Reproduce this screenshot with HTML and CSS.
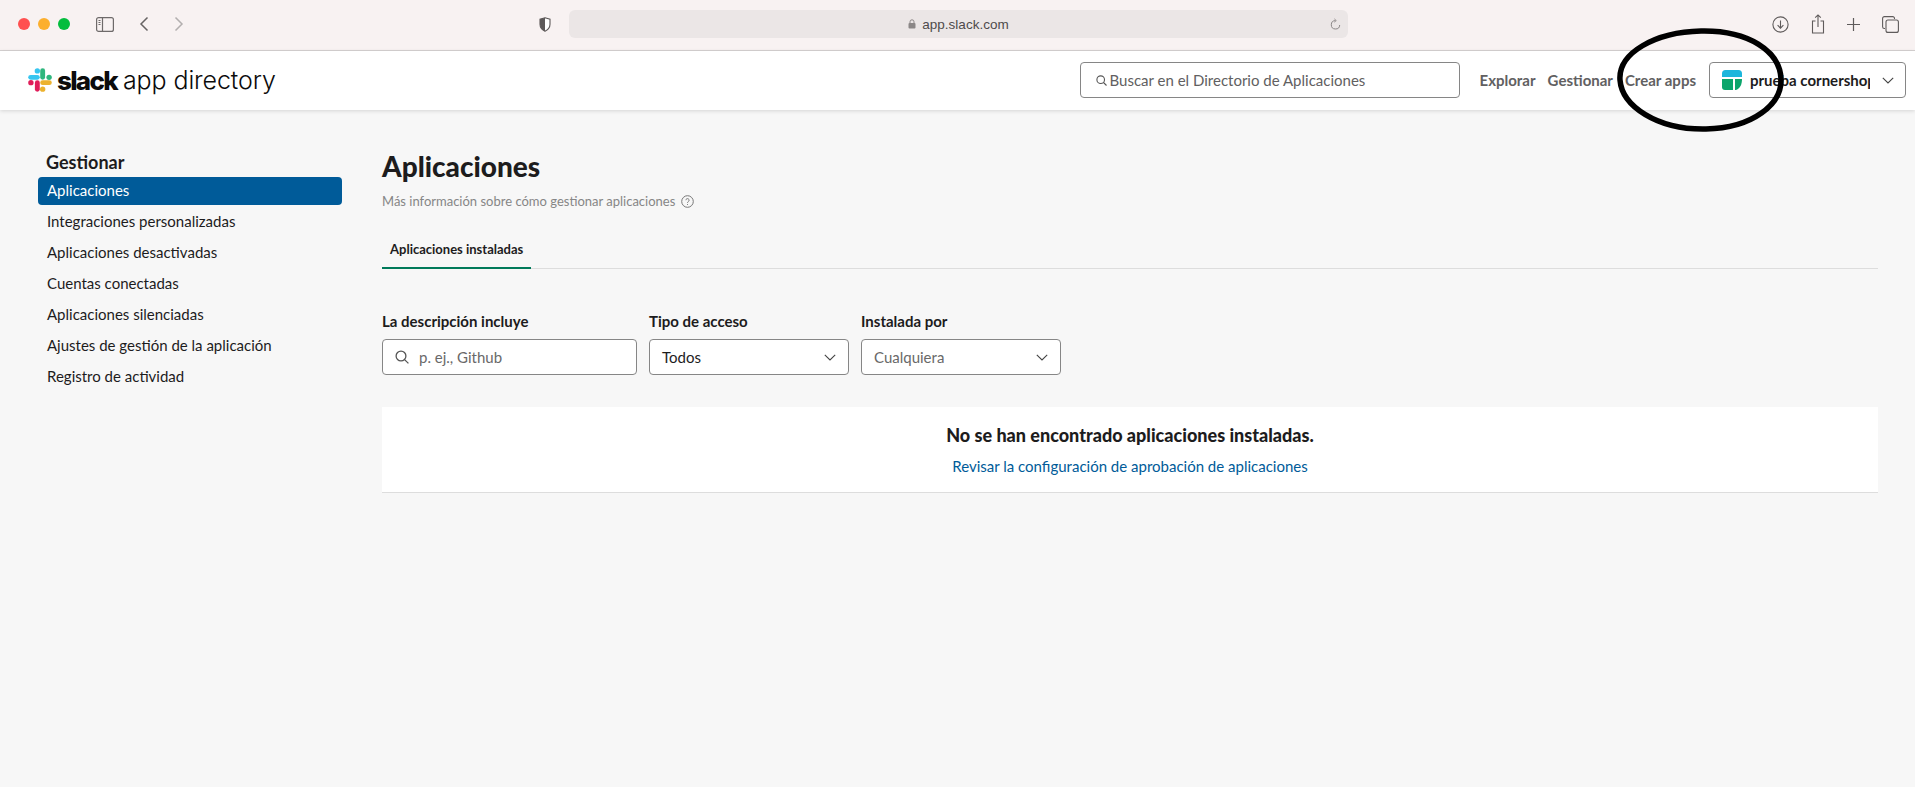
FILE: index.html
```html
<!DOCTYPE html>
<html lang="es">
<head>
    <meta charset="UTF-8">
    <title>Aplicaciones | Slack App Directory</title>
    <link rel="stylesheet" href="styles.css">
</head>
<body>
    <div class="browser-bar">
        <div class="traffic">
            <span class="dot dot-red"></span>
            <span class="dot dot-yellow"></span>
            <span class="dot dot-green"></span>
        </div>
        <svg class="sidebar-icon" width="18" height="15" viewBox="0 0 18 15" fill="none" stroke="#6e6a6a" stroke-width="1.2">
            <rect x="0.6" y="0.6" width="16.8" height="13.8" rx="2"/>
            <path d="M6.5 0.6v13.8"/>
            <path d="M2.5 3.5h2M2.5 5.5h2M2.5 7.5h2" stroke-width="1"/>
        </svg>
        <svg class="nav-icon" width="10" height="16" viewBox="0 0 10 16" fill="none" stroke="#676363" stroke-width="1.5">
            <path d="M8.5 1.5L2 8l6.5 6.5"/>
        </svg>
        <svg class="nav-icon nav-forward" width="10" height="16" viewBox="0 0 10 16" fill="none" stroke="#b3afaf" stroke-width="1.5">
            <path d="M1.5 1.5L8 8l-6.5 6.5"/>
        </svg>
        <svg class="shield" width="12" height="15" viewBox="0 0 12 15">
            <path d="M6 .7L11 2.2v5c0 3.4-2.2 5.6-5 7-2.8-1.4-5-3.6-5-7v-5z" fill="#fff" stroke="#5c5858" stroke-width="1.1"/>
            <path d="M6 .7L1 2.2v5c0 3.4 2.2 5.6 5 7z" fill="#5c5858"/>
        </svg>
        <div class="address">
            <span class="address-text">
                <svg width="8" height="10" viewBox="0 0 8 10"><path d="M2 4V2.8a2 2 0 0 1 4 0V4" fill="none" stroke="#8b8787"/><rect x=".5" y="4" width="7" height="5.5" rx="1" fill="#8b8787"/></svg>
                app.slack.com
            </span>
            <svg class="reload" width="11" height="13" viewBox="0 0 11 13" fill="none" stroke="#8b8787">
                <path d="M5.5 2.6a4.2 4.2 0 1 0 4.2 4.4"/>
                <path d="M4.3.8l2 1.8-2 1.6" stroke-width=".8"/>
            </svg>
        </div>
        <div class="browser-actions">
            <svg width="17" height="17" viewBox="0 0 17 17" fill="none" stroke="#5f5b5b" stroke-width="1.1">
                <circle cx="8.5" cy="8.5" r="7.6"/>
                <path d="M8.5 4.5v7.5M5.6 9.2l2.9 2.9 2.9-2.9"/>
            </svg>
            <svg width="14" height="20" viewBox="0 0 14 20" fill="none" stroke="#5f5b5b" stroke-width="1.1">
                <path d="M4.5 7H1.5v12h11V7H9.5"/>
                <path d="M7 13V1M4.2 3.6L7 .9l2.8 2.7"/>
            </svg>
            <svg width="13" height="13" viewBox="0 0 13 13" fill="none" stroke="#5f5b5b" stroke-width="1.2">
                <path d="M6.5 0v13M0 6.5h13"/>
            </svg>
            <svg width="17" height="17" viewBox="0 0 17 17" fill="none" stroke="#5f5b5b" stroke-width="1.1">
                <path d="M3 12.5H2.4A1.8 1.8 0 0 1 .6 10.7V2.4A1.8 1.8 0 0 1 2.4.6h8.3a1.8 1.8 0 0 1 1.8 1.8V3"/>
                <rect x="4" y="4" width="12.4" height="12.4" rx="2"/>
            </svg>
        </div>
    </div>

    <header class="site-header">
        <a class="logo" href="#">
            <svg width="24" height="24" viewBox="0 0 54 54" fill="none" stroke-width="11" stroke-linecap="round">
                <path d="M33 6v15" stroke="#2eb67d"/>
                <path d="M47.5 21h-.1" stroke="#2eb67d" stroke-width="12"/>
                <path d="M6 21h15" stroke="#36c5f0"/>
                <path d="M21 6.5v.1" stroke="#36c5f0" stroke-width="12"/>
                <path d="M21 33v15" stroke="#e01e5a"/>
                <path d="M6.5 33h.1" stroke="#e01e5a" stroke-width="12"/>
                <path d="M33 33h15" stroke="#ecb22e"/>
                <path d="M33 47.5v.1" stroke="#ecb22e" stroke-width="12"/>
            </svg>
            <span class="logo-slack">slack</span>
            <span class="logo-dir">app directory</span>
        </a>
        <div class="search-box">
            <svg width="11" height="11" viewBox="0 0 11 11" fill="none" stroke="#555" stroke-width="1.1"><circle cx="4.7" cy="4.7" r="3.8"/><path d="M7.5 7.5l3 3"/></svg>
            Buscar en el Directorio de Aplicaciones
        </div>
        <nav class="top-nav">
            <a href="#">Explorar</a>
            <a href="#">Gestionar</a>
            <a href="#">Crear apps</a>
        </nav>
        <div class="workspace">
            <svg width="20" height="20" viewBox="0 0 20 20">
                <path d="M0 7V3.5A3.5 3.5 0 0 1 3.5 0h13A3.5 3.5 0 0 1 20 3.5V7z" fill="#1cb6dc"/>
                <path d="M0 9h11v11H3a3 3 0 0 1-3-3z" fill="#0ba56b"/>
                <path d="M13 9h7c0 5-1.5 9-6 11h-1z" fill="#0ba56b"/>
            </svg>
            <span class="workspace-name">prueba cornershop</span>
            <svg class="chevron" width="12" height="7" viewBox="0 0 12 7" fill="none" stroke="#444" stroke-width="1.1"><path d="M.8.8L6 6l5.2-5.2"/></svg>
        </div>
    </header>

    <div class="page">
        <aside class="side">
            <h2 class="side-title">Gestionar</h2>
            <ul class="side-list">
                <li class="side-item active">Aplicaciones</li>
                <li class="side-item">Integraciones personalizadas</li>
                <li class="side-item">Aplicaciones desactivadas</li>
                <li class="side-item">Cuentas conectadas</li>
                <li class="side-item">Aplicaciones silenciadas</li>
                <li class="side-item">Ajustes de gestión de la aplicación</li>
                <li class="side-item">Registro de actividad</li>
            </ul>
        </aside>
        <main class="content">
            <h1 class="page-title">Aplicaciones</h1>
            <p class="page-sub">
                Más información sobre cómo gestionar aplicaciones
                <svg width="13" height="13" viewBox="0 0 13 13" fill="none" stroke="#777"><circle cx="6.5" cy="6.5" r="5.8"/><path d="M4.9 5.2a1.6 1.6 0 1 1 2.4 1.4c-.5.3-.8.6-.8 1.2M6.5 9v.9"/></svg>
            </p>
            <div class="tabs">
                <span class="tab">Aplicaciones instaladas</span>
            </div>
            <div class="filters">
                <div class="filter filter-search">
                    <label class="filter-label">La descripción incluye</label>
                    <div class="field">
                        <svg width="14" height="14" viewBox="0 0 14 14" fill="none" stroke="#555" stroke-width="1.3"><circle cx="6" cy="6" r="4.9"/><path d="M9.6 9.6l3.8 3.8"/></svg>
                        <span class="placeholder">p. ej., Github</span>
                    </div>
                </div>
                <div class="filter">
                    <label class="filter-label">Tipo de acceso</label>
                    <div class="field field-select">
                        <span>Todos</span>
                        <svg width="12" height="7" viewBox="0 0 12 7" fill="none" stroke="#444" stroke-width="1.1"><path d="M.8.8L6 6l5.2-5.2"/></svg>
                    </div>
                </div>
                <div class="filter">
                    <label class="filter-label">Instalada por</label>
                    <div class="field field-select">
                        <span class="placeholder">Cualquiera</span>
                        <svg width="12" height="7" viewBox="0 0 12 7" fill="none" stroke="#444" stroke-width="1.1"><path d="M.8.8L6 6l5.2-5.2"/></svg>
                    </div>
                </div>
            </div>
            <section class="empty">
                <h3 class="empty-title">No se han encontrado aplicaciones instaladas.</h3>
                <a class="empty-link" href="#">Revisar la configuración de aprobación de aplicaciones</a>
            </section>
        </main>
    </div>

    <!-- hand drawn circle over the header -->
    <svg class="scribble" width="172" height="108" viewBox="0 0 172 108" fill="none" stroke="#000" stroke-width="5.5">
        <path d="M86 4C133 3 165 24 166 52c1 25-28 49-75 50C42 103 7 79 5 53 3 26 40 5 86 4z"/>
    </svg>
</body>
</html>
```

FILE: styles.css
```css
* {
    box-sizing: border-box;
}
html, body {
    height: 100%;
}
body {
    margin: 0;
    font-family: Lato, "Open Sans", sans-serif;
    background-color: #f7f7f7;
    color: #1d1c1d;
    overflow: hidden;
}

/* browser chrome */
.browser-bar {
    height: 51px;
    background-color: #f8f2f2;
    border-bottom: 1px solid #d6d2d2;
    display: flex;
    align-items: center;
    padding: 0 0 2px 18px;
}
.traffic {
    display: flex;
    gap: 8px;
}
.dot {
    width: 12px;
    height: 12px;
    border-radius: 50%;
}
.dot-red { background-color: #ff5050; }
.dot-yellow { background-color: #fcaf2e; }
.dot-green { background-color: #03bd3d; }
.sidebar-icon {
    margin-left: 26px;
}
.nav-icon {
    margin-left: 25px;
}
.nav-forward {
    margin-left: 25px;
}
.shield {
    margin-left: 355px;
}
.address {
    margin-left: 18px;
    width: 779px;
    height: 28px;
    background-color: #ebe6e6;
    border-radius: 6px;
    display: flex;
    align-items: center;
    justify-content: center;
    position: relative;
}
.address-text {
    font-family: "Liberation Sans", sans-serif;
    font-size: 13.5px;
    color: #4e4b4b;
    display: flex;
    align-items: center;
    gap: 6px;
}
.reload {
    position: absolute;
    right: 7px;
    top: 8px;
}
.browser-actions {
    margin-left: auto;
    padding-right: 16px;
    display: flex;
    align-items: center;
    gap: 22px;
}

/* app directory header */
.site-header {
    height: 59px;
    background-color: #fff;
    box-shadow: 0 1px 4px rgba(0, 0, 0, .14);
    display: flex;
    align-items: center;
    padding: 0 9px 1px 28px;
    position: relative;
}
.logo {
    display: flex;
    align-items: center;
    text-decoration: none;
    color: #0b0b0b;
}
.logo-slack {
    font-family: Inter, sans-serif;
    font-size: 26px;
    font-weight: 800;
    letter-spacing: -1.7px;
    margin-left: 5px;
}
.logo-dir {
    font-family: Inter, sans-serif;
    font-size: 25px;
    font-weight: 300;
    letter-spacing: -.1px;
    margin-left: 6px;
}
.search-box {
    margin-left: auto;
    width: 380px;
    height: 36px;
    background-color: #fff;
    border: 1px solid #868686;
    border-radius: 4px;
    display: flex;
    align-items: center;
    gap: 3px;
    padding-left: 15px;
    font-size: 15px;
    color: #616061;
}
.top-nav {
    display: flex;
    gap: 12px;
    margin-left: 20px;
}
.top-nav a {
    font-size: 15px;
    font-weight: 700;
    color: #616061;
    text-decoration: none;
}
.workspace {
    margin-left: 13px;
    width: 197px;
    height: 36px;
    background-color: #fff;
    border: 1px solid #868686;
    border-radius: 4px;
    display: flex;
    align-items: center;
    padding-left: 12px;
}
.workspace-name {
    margin-left: 8px;
    width: 120px;
    overflow: hidden;
    white-space: nowrap;
    font-size: 15px;
    font-weight: 700;
    color: #1d1c1d;
}
.chevron {
    margin-left: 12px;
}

/* page */
.page {
    display: flex;
    padding-right: 37px;
}
.side {
    width: 382px;
    padding: 40px 40px 0 38px;
}
.side-title {
    margin: 0 0 3px;
    padding-left: 8px;
    font-size: 18px;
    line-height: 24px;
    font-weight: 700;
}
.side-list {
    list-style: none;
    margin: 0;
    padding: 0;
}
.side-item {
    height: 28px;
    line-height: 26px;
    margin-bottom: 3px;
    padding-left: 9px;
    font-size: 15px;
    color: #1d1c1d;
}
.side-item.active {
    background-color: #005b99;
    border-radius: 4px;
    color: #fff;
}
.content {
    flex: 1;
    padding-top: 38px;
}
.page-title {
    margin: 0;
    font-size: 28px;
    line-height: 36px;
    font-weight: 900;
}
.page-sub {
    margin: 7px 0 0;
    display: flex;
    align-items: center;
    gap: 6px;
    font-size: 13px;
    line-height: 20px;
    color: #868686;
}
.tabs {
    margin-top: 19px;
    border-bottom: 1px solid #ddd;
    height: 39px;
}
.tab {
    display: inline-block;
    height: 39px;
    padding: 9px 8px 0;
    border-bottom: 2px solid #007a5a;
    font-size: 13px;
    line-height: 20px;
    font-weight: 700;
}
.filters {
    display: flex;
    gap: 12px;
    margin-top: 41px;
}
.filter {
    width: 200px;
}
.filter-search {
    width: 255px;
}
.filter-label {
    display: block;
    font-size: 15px;
    line-height: 22px;
    font-weight: 700;
    margin-bottom: 7px;
}
.field {
    height: 36px;
    background-color: #fff;
    border: 1px solid #868686;
    border-radius: 4px;
    display: flex;
    align-items: center;
    gap: 10px;
    padding: 0 12px;
    font-size: 15px;
}
.field-select {
    justify-content: space-between;
}
.placeholder {
    color: #696969;
}
.empty {
    margin-top: 32px;
    height: 86px;
    background-color: #fff;
    border-bottom: 1px solid #ddd;
    text-align: center;
    padding-top: 16px;
}
.empty-title {
    margin: 0;
    font-size: 18px;
    line-height: 24px;
    font-weight: 900;
}
.empty-link {
    display: block;
    margin-top: 8px;
    font-size: 15px;
    line-height: 22px;
    color: #005b99;
    text-decoration: none;
}

/* drawn on top of the screenshot */
.scribble {
    position: absolute;
    left: 1615px;
    top: 27px;
}
```
